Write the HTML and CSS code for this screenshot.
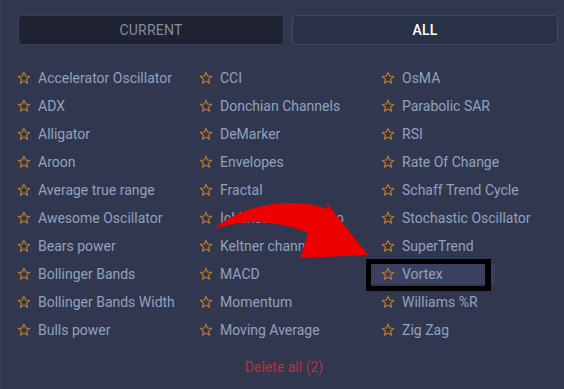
FILE: index.html
```html
<!DOCTYPE html>
<html>
<head>
<meta charset="utf-8">
<link rel="stylesheet" href="styles.css">
</head>
<body>
<div class="panel">
  <div class="tabs">
    <div class="tab tab-current">CURRENT</div>
    <div class="tab tab-all">ALL</div>
  </div>
  <div class="grid">
    <div class="col">
      <div class="item"><svg class="star" viewBox="0 0 24 24"><path d="M12 2.5l2.9 6.1 6.6.8-4.9 4.6 1.3 6.6L12 17.3l-5.9 3.3 1.3-6.6-4.9-4.6 6.6-.8z"/></svg><span>Accelerator Oscillator</span></div>
      <div class="item"><svg class="star" viewBox="0 0 24 24"><path d="M12 2.5l2.9 6.1 6.6.8-4.9 4.6 1.3 6.6L12 17.3l-5.9 3.3 1.3-6.6-4.9-4.6 6.6-.8z"/></svg><span>ADX</span></div>
      <div class="item"><svg class="star" viewBox="0 0 24 24"><path d="M12 2.5l2.9 6.1 6.6.8-4.9 4.6 1.3 6.6L12 17.3l-5.9 3.3 1.3-6.6-4.9-4.6 6.6-.8z"/></svg><span>Alligator</span></div>
      <div class="item"><svg class="star" viewBox="0 0 24 24"><path d="M12 2.5l2.9 6.1 6.6.8-4.9 4.6 1.3 6.6L12 17.3l-5.9 3.3 1.3-6.6-4.9-4.6 6.6-.8z"/></svg><span>Aroon</span></div>
      <div class="item"><svg class="star" viewBox="0 0 24 24"><path d="M12 2.5l2.9 6.1 6.6.8-4.9 4.6 1.3 6.6L12 17.3l-5.9 3.3 1.3-6.6-4.9-4.6 6.6-.8z"/></svg><span>Average true range</span></div>
      <div class="item"><svg class="star" viewBox="0 0 24 24"><path d="M12 2.5l2.9 6.1 6.6.8-4.9 4.6 1.3 6.6L12 17.3l-5.9 3.3 1.3-6.6-4.9-4.6 6.6-.8z"/></svg><span>Awesome Oscillator</span></div>
      <div class="item"><svg class="star" viewBox="0 0 24 24"><path d="M12 2.5l2.9 6.1 6.6.8-4.9 4.6 1.3 6.6L12 17.3l-5.9 3.3 1.3-6.6-4.9-4.6 6.6-.8z"/></svg><span>Bears power</span></div>
      <div class="item"><svg class="star" viewBox="0 0 24 24"><path d="M12 2.5l2.9 6.1 6.6.8-4.9 4.6 1.3 6.6L12 17.3l-5.9 3.3 1.3-6.6-4.9-4.6 6.6-.8z"/></svg><span>Bollinger Bands</span></div>
      <div class="item"><svg class="star" viewBox="0 0 24 24"><path d="M12 2.5l2.9 6.1 6.6.8-4.9 4.6 1.3 6.6L12 17.3l-5.9 3.3 1.3-6.6-4.9-4.6 6.6-.8z"/></svg><span>Bollinger Bands Width</span></div>
      <div class="item"><svg class="star" viewBox="0 0 24 24"><path d="M12 2.5l2.9 6.1 6.6.8-4.9 4.6 1.3 6.6L12 17.3l-5.9 3.3 1.3-6.6-4.9-4.6 6.6-.8z"/></svg><span>Bulls power</span></div>
    </div>
    <div class="col">
      <div class="item"><svg class="star" viewBox="0 0 24 24"><path d="M12 2.5l2.9 6.1 6.6.8-4.9 4.6 1.3 6.6L12 17.3l-5.9 3.3 1.3-6.6-4.9-4.6 6.6-.8z"/></svg><span>CCI</span></div>
      <div class="item"><svg class="star" viewBox="0 0 24 24"><path d="M12 2.5l2.9 6.1 6.6.8-4.9 4.6 1.3 6.6L12 17.3l-5.9 3.3 1.3-6.6-4.9-4.6 6.6-.8z"/></svg><span>Donchian Channels</span></div>
      <div class="item"><svg class="star" viewBox="0 0 24 24"><path d="M12 2.5l2.9 6.1 6.6.8-4.9 4.6 1.3 6.6L12 17.3l-5.9 3.3 1.3-6.6-4.9-4.6 6.6-.8z"/></svg><span>DeMarker</span></div>
      <div class="item"><svg class="star" viewBox="0 0 24 24"><path d="M12 2.5l2.9 6.1 6.6.8-4.9 4.6 1.3 6.6L12 17.3l-5.9 3.3 1.3-6.6-4.9-4.6 6.6-.8z"/></svg><span>Envelopes</span></div>
      <div class="item"><svg class="star" viewBox="0 0 24 24"><path d="M12 2.5l2.9 6.1 6.6.8-4.9 4.6 1.3 6.6L12 17.3l-5.9 3.3 1.3-6.6-4.9-4.6 6.6-.8z"/></svg><span>Fractal</span></div>
      <div class="item"><svg class="star" viewBox="0 0 24 24"><path d="M12 2.5l2.9 6.1 6.6.8-4.9 4.6 1.3 6.6L12 17.3l-5.9 3.3 1.3-6.6-4.9-4.6 6.6-.8z"/></svg><span>Ichimoku Kinko Hyo</span></div>
      <div class="item"><svg class="star" viewBox="0 0 24 24"><path d="M12 2.5l2.9 6.1 6.6.8-4.9 4.6 1.3 6.6L12 17.3l-5.9 3.3 1.3-6.6-4.9-4.6 6.6-.8z"/></svg><span>Keltner channel</span></div>
      <div class="item"><svg class="star" viewBox="0 0 24 24"><path d="M12 2.5l2.9 6.1 6.6.8-4.9 4.6 1.3 6.6L12 17.3l-5.9 3.3 1.3-6.6-4.9-4.6 6.6-.8z"/></svg><span>MACD</span></div>
      <div class="item"><svg class="star" viewBox="0 0 24 24"><path d="M12 2.5l2.9 6.1 6.6.8-4.9 4.6 1.3 6.6L12 17.3l-5.9 3.3 1.3-6.6-4.9-4.6 6.6-.8z"/></svg><span>Momentum</span></div>
      <div class="item"><svg class="star" viewBox="0 0 24 24"><path d="M12 2.5l2.9 6.1 6.6.8-4.9 4.6 1.3 6.6L12 17.3l-5.9 3.3 1.3-6.6-4.9-4.6 6.6-.8z"/></svg><span>Moving Average</span></div>
    </div>
    <div class="col">
      <div class="item"><svg class="star" viewBox="0 0 24 24"><path d="M12 2.5l2.9 6.1 6.6.8-4.9 4.6 1.3 6.6L12 17.3l-5.9 3.3 1.3-6.6-4.9-4.6 6.6-.8z"/></svg><span>OsMA</span></div>
      <div class="item"><svg class="star" viewBox="0 0 24 24"><path d="M12 2.5l2.9 6.1 6.6.8-4.9 4.6 1.3 6.6L12 17.3l-5.9 3.3 1.3-6.6-4.9-4.6 6.6-.8z"/></svg><span>Parabolic SAR</span></div>
      <div class="item"><svg class="star" viewBox="0 0 24 24"><path d="M12 2.5l2.9 6.1 6.6.8-4.9 4.6 1.3 6.6L12 17.3l-5.9 3.3 1.3-6.6-4.9-4.6 6.6-.8z"/></svg><span>RSI</span></div>
      <div class="item"><svg class="star" viewBox="0 0 24 24"><path d="M12 2.5l2.9 6.1 6.6.8-4.9 4.6 1.3 6.6L12 17.3l-5.9 3.3 1.3-6.6-4.9-4.6 6.6-.8z"/></svg><span>Rate Of Change</span></div>
      <div class="item"><svg class="star" viewBox="0 0 24 24"><path d="M12 2.5l2.9 6.1 6.6.8-4.9 4.6 1.3 6.6L12 17.3l-5.9 3.3 1.3-6.6-4.9-4.6 6.6-.8z"/></svg><span>Schaff Trend Cycle</span></div>
      <div class="item"><svg class="star" viewBox="0 0 24 24"><path d="M12 2.5l2.9 6.1 6.6.8-4.9 4.6 1.3 6.6L12 17.3l-5.9 3.3 1.3-6.6-4.9-4.6 6.6-.8z"/></svg><span>Stochastic Oscillator</span></div>
      <div class="item"><svg class="star" viewBox="0 0 24 24"><path d="M12 2.5l2.9 6.1 6.6.8-4.9 4.6 1.3 6.6L12 17.3l-5.9 3.3 1.3-6.6-4.9-4.6 6.6-.8z"/></svg><span>SuperTrend</span></div>
      <div class="item item-hover"><svg class="star" viewBox="0 0 24 24"><path d="M12 2.5l2.9 6.1 6.6.8-4.9 4.6 1.3 6.6L12 17.3l-5.9 3.3 1.3-6.6-4.9-4.6 6.6-.8z"/></svg><span>Vortex</span></div>
      <div class="item"><svg class="star" viewBox="0 0 24 24"><path d="M12 2.5l2.9 6.1 6.6.8-4.9 4.6 1.3 6.6L12 17.3l-5.9 3.3 1.3-6.6-4.9-4.6 6.6-.8z"/></svg><span>Williams %R</span></div>
      <div class="item"><svg class="star" viewBox="0 0 24 24"><path d="M12 2.5l2.9 6.1 6.6.8-4.9 4.6 1.3 6.6L12 17.3l-5.9 3.3 1.3-6.6-4.9-4.6 6.6-.8z"/></svg><span>Zig Zag</span></div>
    </div>
  </div>
  <div class="footer"><span class="delete">Delete all (2)</span></div>

  <div class="highlight"></div>
  <svg class="arrow" viewBox="0 0 564 389" width="564" height="389">
    <path d="M212 229 C 228 214, 256 203, 290 203 C 303 203, 314 205, 326 209 L 324 202 L 366 255 L 298 258 L 306 233 C 292 226, 270 222, 252 222 C 238 222, 224 225, 212 229 Z" fill="#ec0000"/>
  </svg>
</div>
</body>
</html>
```

FILE: styles.css
```css
html, body {
  margin: 0;
  padding: 0;
}
body {
  background: #323750;
  font-family: Roboto, "Liberation Sans", sans-serif;
  width: 564px;
  height: 389px;
  overflow: hidden;
}
.panel {
  position: relative;
  width: 564px;
  height: 389px;
  box-sizing: border-box;
  border-left: 2px solid #363b58;
  padding: 15px 6px 0 16px;
}
.tabs {
  display: flex;
  gap: 8px;
  height: 30px;
}
.tab {
  flex: 1;
  box-sizing: border-box;
  border-radius: 4px;
  display: flex;
  align-items: center;
  justify-content: center;
  font-size: 14px;
  letter-spacing: 0.2px;
}
.tab-current {
  background: #1f2231;
  border: 1px solid #393e55;
  color: #7e8ca4;
}
.tab-all {
  background: #293146;
  border: 1px solid #434961;
  color: #ffffff;
  font-weight: 500;
}
.grid {
  display: grid;
  grid-template-columns: 182px 182px 182px;
  margin-top: 19px;
  margin-left: -1px;
}
.col {
  display: flex;
  flex-direction: column;
}
.item {
  height: 28px;
  display: flex;
  align-items: center;
  gap: 7px;
  color: #8fa2bd;
  font-size: 14px;
  white-space: nowrap;
}
.star {
  width: 14px;
  height: 14px;
  flex: none;
}
.star path {
  fill: none;
  stroke: #bf7b2c;
  stroke-width: 2;
  stroke-linejoin: miter;
}
.item-hover {
  background: #3a4060;
  margin-left: -11px;
  padding-left: 11px;
  width: 114px;
  height: 20px;
  margin-top: 4px;
  margin-bottom: 4px;
}
.footer {
  display: flex;
  justify-content: center;
  margin-top: 15px;
  padding-right: 8px;
}
.delete {
  color: #b4333b;
  font-size: 14px;
}
.highlight {
  position: absolute;
  left: 364px;
  top: 259px;
  width: 125px;
  height: 32px;
  box-sizing: border-box;
  border: 5px solid #000;
  border-right-width: 6px;
}
.arrow {
  position: absolute;
  left: 0;
  top: 0;
  pointer-events: none;
}
```
